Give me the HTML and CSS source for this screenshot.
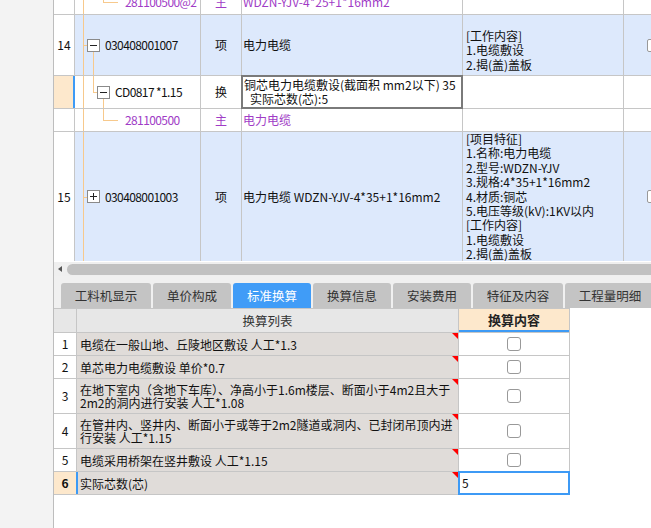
FILE: index.html
```html
<!DOCTYPE html>
<html lang="zh-CN">
<head>
<meta charset="utf-8">
<title>标准换算</title>
<link rel="stylesheet" href="styles.css">
</head>
<body>
<div class="app">
  <aside class="side"></aside>
  <main class="main">
    <div class="top-view">
      <div class="tgrid">
        <!-- partial row -->
        <div class="c num"></div>
        <div class="c code l3"><i class="ln v1"></i><i class="ln up3"></i><i class="ln h3"></i><span class="tx mono purple">281100500@2</span></div>
        <div class="c type purple">主</div>
        <div class="c name purple">WDZN-YJV-4*25+1*16mm2</div>
        <div class="c desc"></div>
        <div class="c last"></div>

        <!-- row 14 -->
        <div class="c num">14</div>
        <div class="c code blue"><i class="ln v1"></i><i class="ln stub1"></i><i class="ln down2"></i><span class="tog"></span><span class="tx mono">030408001007</span></div>
        <div class="c type blue">项</div>
        <div class="c name blue">电力电缆</div>
        <div class="c desc blue desc-bottom"><div>[工作内容]<br>1.电缆敷设<br>2.揭(盖)盖板</div></div>
        <div class="c last blue"><span class="chk"></span></div>

        <!-- row CD0817 -->
        <div class="c num cur-num"></div>
        <div class="c code l2"><i class="ln v1"></i><i class="ln up2"></i><i class="ln h2"></i><i class="ln down3"></i><span class="tog"></span><span class="tx mono">CD0817 *1.15</span></div>
        <div class="c type">换</div>
        <div class="c name edit"><div>铜芯电力电缆敷设(截面积 mm2以下) 35<br>&ensp;实际芯数(芯):5</div></div>
        <div class="c desc"></div>
        <div class="c last"></div>

        <!-- row 281100500 -->
        <div class="c num"></div>
        <div class="c code l3"><i class="ln v1"></i><i class="ln up3"></i><i class="ln h3"></i><span class="tx mono purple">281100500</span></div>
        <div class="c type purple">主</div>
        <div class="c name purple">电力电缆</div>
        <div class="c desc"></div>
        <div class="c last"></div>

        <!-- row 15 -->
        <div class="c num">15</div>
        <div class="c code blue"><i class="ln v1"></i><i class="ln stub1"></i><span class="tog plus"></span><span class="tx mono">030408001003</span></div>
        <div class="c type blue">项</div>
        <div class="c name blue">电力电缆 WDZN-YJV-4*35+1*16mm2</div>
        <div class="c desc blue desc-top"><div>[项目特征]<br>1.名称:电力电缆<br>2.型号:WDZN-YJV<br>3.规格:4*35+1*16mm2<br>4.材质:铜芯<br>5.电压等级(kV):1KV以内<br>[工作内容]<br>1.电缆敷设<br>2.揭(盖)盖板</div></div>
        <div class="c last blue"><span class="chk"></span></div>
      </div>
    </div>

    <div class="hscroll"><span class="arrow"></span><span class="thumb"></span></div>

    <div class="tabs">
      <div class="tab wide">工料机显示</div>
      <div class="tab">单价构成</div>
      <div class="tab on">标准换算</div>
      <div class="tab">换算信息</div>
      <div class="tab">安装费用</div>
      <div class="tab wide">特征及内容</div>
      <div class="tab wide">工程量明细</div>
    </div>

    <div class="bgrid">
      <div class="c hd"></div>
      <div class="c hd">换算列表</div>
      <div class="c hd hcur">换算内容</div>

      <div class="c rn">1</div>
      <div class="c txt">电缆在一般山地、丘陵地区敷设 人工*1.3</div>
      <div class="c val"><span class="cb"></span></div>

      <div class="c rn">2</div>
      <div class="c txt">单芯电力电缆敷设 单价*0.7</div>
      <div class="c val"><span class="cb"></span></div>

      <div class="c rn">3</div>
      <div class="c txt"><div>在地下室内（含地下车库）、净高小于1.6m楼层、断面小于4m2且大于<br>2m2的洞内进行安装 人工*1.08</div></div>
      <div class="c val"><span class="cb"></span></div>

      <div class="c rn">4</div>
      <div class="c txt"><div>在管井内、竖井内、断面小于或等于2m2隧道或洞内、已封闭吊顶内进<br>行安装 人工*1.15</div></div>
      <div class="c val"><span class="cb"></span></div>

      <div class="c rn">5</div>
      <div class="c txt">电缆采用桥架在竖井敷设 人工*1.15</div>
      <div class="c val"><span class="cb"></span></div>

      <div class="c rn rcur">6</div>
      <div class="c txt tcur">实际芯数(芯)</div>
      <div class="c val vcur">5</div>
    </div>
  </main>
</div>
</body>
</html>
```

FILE: styles.css
```css
* { box-sizing: border-box; }
html, body { margin: 0; padding: 0; }
body {
  width: 651px;
  height: 528px;
  overflow: hidden;
  background: #fff;
  font-family: "Noto Sans CJK SC", "Noto Sans", sans-serif;
  font-size: 12px;
  color: #111;
}
.app { display: flex; height: 528px; }
.side {
  width: 54px;
  flex: none;
  background: #f3f3f3;
  border-right: 1px solid #bdbdbd;
}
.main {
  flex: 1;
  min-width: 0;
  display: flex;
  flex-direction: column;
  overflow: hidden;
  background: #fff;
}

/* ---------- top tree grid ---------- */
.top-view { height: 262px; flex: none; overflow: hidden; background: #fff; }
.tgrid {
  display: grid;
  grid-template-columns: 20px 125px 40px 220px 160px 60px;
  grid-template-rows: 25px 60px 32px 22px 129px;
  gap: 1px;
  background: #c6c6c6;
  margin-top: -11px;
  width: max-content;
}
.c {
  background: #fff;
  display: flex;
  align-items: center;
  white-space: nowrap;
  overflow: hidden;
  line-height: 14px;
}
.blue { background: #dde9fc; }
.purple { color: #a03cc6; }
.num { justify-content: center; }
.type { justify-content: center; }
.name { padding-left: 1px; }
.desc { padding-left: 3px; line-height: 14.4px; }
.desc-bottom { align-items: flex-end; padding-bottom: 3px; }
.desc-top { align-items: flex-start; }
.last { padding-left: 23px; }
.chk {
  width: 13px;
  height: 13px;
  border: 1px solid #999;
  border-radius: 2px;
  background: #fff;
  flex: none;
}

.code { position: relative; padding-left: 12px; }
.code.l2 { padding-left: 22px; }
.code.l3 { padding-left: 50px; }
.mono { letter-spacing: -0.6px; }
.tog {
  position: relative;
  z-index: 1;
  flex: none;
  width: 13px;
  height: 13px;
  border: 1px solid #8a8a8a;
  background: #fff;
  margin-right: 5px;
}
.tog::before {
  content: "";
  position: absolute;
  left: 2px;
  right: 2px;
  top: 5px;
  height: 1px;
  background: #222;
}
.tog.plus::after {
  content: "";
  position: absolute;
  top: 2px;
  bottom: 2px;
  left: 5px;
  width: 1px;
  background: #222;
}
.ln { position: absolute; background: #f7c98c; }
.v1 { left: 8px; top: 0; bottom: 0; width: 1px; }
.stub1 { left: 8px; top: 50%; width: 4px; height: 1px; }
.down2 { left: 18px; top: 50%; bottom: 0; width: 1px; }
.up2 { left: 18px; top: 0; height: 50%; width: 1px; }
.h2 { left: 18px; top: 50%; width: 4px; height: 1px; }
.down3 { left: 28px; top: 50%; bottom: 0; width: 1px; }
.up3 { left: 28px; top: 0; height: 50%; width: 1px; }
.h3 { left: 28px; top: 50%; width: 15px; height: 1px; }

.cur-num {
  background: #fde8cc;
  margin-right: -1px;
  border-right: 2px solid #3d9af5;
}
.edit {
  margin: -1px;
  border: 2px solid #7a7a7a;
  padding-left: 1px;
  background: #fff;
}

/* ---------- scrollbar ---------- */
.hscroll {
  height: 14px;
  flex: none;
  background: #efefef;
  display: flex;
  align-items: center;
  overflow: hidden;
}
.arrow {
  flex: none;
  width: 0;
  height: 0;
  border-top: 3px solid transparent;
  border-bottom: 3px solid transparent;
  border-right: 4px solid #555;
  margin-left: 4px;
}
.thumb {
  flex: none;
  width: 700px;
  height: 11px;
  background: #c1c1c1;
  border-radius: 6px;
  margin-left: 5px;
}

/* ---------- tabs ---------- */
.tabs {
  height: 32px;
  flex: none;
  background: #f0f0f0;
  display: flex;
  align-items: flex-end;
  gap: 2px;
  padding-left: 7px;
  overflow: hidden;
}
.tab {
  flex: none;
  width: 78px;
  height: 25px;
  background: #c4c4c4;
  border-radius: 3px 3px 0 0;
  display: flex;
  align-items: center;
  justify-content: center;
  font-size: 12.5px;
  color: #333;
}
.tab.wide { width: 90px; }
.tab.on { background: #409cf7; color: #fff; }

/* ---------- bottom grid ---------- */
.bgrid {
  display: grid;
  grid-template-columns: 22px 381px 110px;
  grid-template-rows: 23px 22px 22px 34px 34px 22px 22px;
  gap: 1px;
  background: #c6c6c6;
  padding: 1px 1px 1px 0;
  width: max-content;
}
.hd {
  background: #e7e7e7;
  justify-content: center;
  font-size: 12.5px;
  color: #333;
}
.hd.hcur {
  background: #fde8cc;
  font-weight: bold;
  font-size: 13px;
  color: #222;
  border-bottom: 2px solid #3d9af5;
}
.rn { justify-content: center; }
.rn.rcur { background: #fde8cc; font-weight: bold; }
.txt {
  background: #e0dcd9;
  padding-left: 3px;
  position: relative;
  line-height: 13px;
}
.txt::after {
  content: "";
  position: absolute;
  top: 0;
  right: 0;
  border-top: 6px solid #f00;
  border-left: 6px solid transparent;
}
.txt.tcur {
  margin-left: -1px;
  border-left: 2px solid #3d9af5;
  padding-left: 2px;
}
.val { justify-content: center; }
.cb {
  width: 14px;
  height: 14px;
  border: 1px solid #999;
  border-radius: 3px;
  background: #fff;
}
.val.vcur {
  margin: -1px;
  border: 2px solid #3d9af5;
  justify-content: flex-start;
  padding-left: 2px;
}
```
